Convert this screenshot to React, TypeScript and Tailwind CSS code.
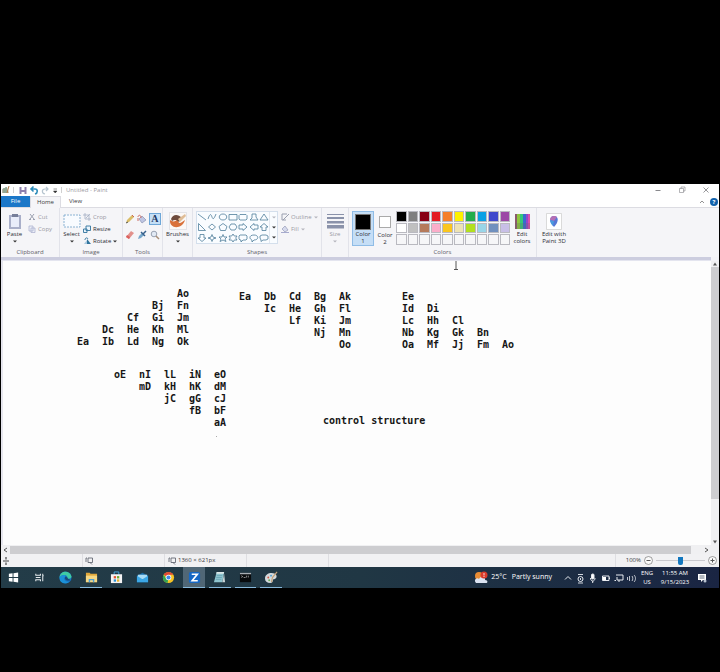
import React from "react";

const stroke = { fill: "none", stroke: "#4f7d9a", strokeWidth: 0.8 } as const;

const shapes: string[] = [
  "M1 1L9 7",
  "M1 6C3 0 4 1 5 4S7 6 9 1",
  "M5 1C10 1 10 7 5 7S0 1 5 1Z",
  "M1 1.5H9V7H1Z",
  "M2 1.5H8L9 2.5V6L8 7H2L1 6V2.5Z",
  "M1 7L3 5V1H7V4L9 7Z",
  "M5 1L9 7H1Z",
  "M1.5 0.5V7.5H8.5Z",
  "M5 1L8.5 4L5 7L1.5 4Z",
  "M5 0.5L9 3.5L7.5 7.5H2.5L1 3.5Z",
  "M3 1H7L9 4L7 7H3L1 4Z",
  "M1 2H5V0.5L9 4L5 7.5V6H1Z",
  "M9 2H5V0.5L1 4L5 7.5V6H9Z",
  "M3 7.5V4H1L5 0.5L9 4H7V7.5Z",
  "M3 0.5V4H1L5 7.5L9 4H7V0.5Z",
  "M5 0.5L6 3L9 4L6 5L5 7.5L4 5L1 4L4 3Z",
  "M5 0.5L6 3H9L7 5L8 7.5L5 6L2 7.5L3 5L1 3H4Z",
  "M5 0L6.3 2H9L7.7 4L9 6H6.3L5 8L3.7 6H1L2.3 4L1 2H3.7Z",
  "M2 1H8L9 2V5L8 6H5L3 8V6H2L1 5V2Z",
  "M5 1C10 1 10 6 5 6L3 8V6C0 5 0 1 5 1Z",
  "M3 1H7L9 2V5L7 6H4L2 7.5V6L1 4V2Z",
];

const swatches: string[] = [
  "bg-black", "bg-[#7f7f7f]", "bg-[#880015]", "bg-[#e31c24]", "bg-[#f57f2a]", "bg-[#fdf100]", "bg-[#22ad4c]", "bg-[#0aa0e4]", "bg-[#3f48cc]", "bg-[#9c48a6]",
  "bg-white", "bg-[#c0c0c0]", "bg-[#b57a5b]", "bg-[#fbadc9]", "bg-[#fac61e]", "bg-[#ede3b4]", "bg-[#b2e01f]", "bg-[#99d5e8]", "bg-[#7090be]", "bg-[#c8bfe7]",
  "bg-[#f6f6f8]", "bg-[#f6f6f8]", "bg-[#f6f6f8]", "bg-[#f6f6f8]", "bg-[#f6f6f8]", "bg-[#f6f6f8]", "bg-[#f6f6f8]", "bg-[#f6f6f8]", "bg-[#f6f6f8]", "bg-[#f6f6f8]",
];

function Group({ label, className, children }: { label?: string; className: string; children: React.ReactNode }) {
  return (
    <section className={`flex h-full shrink-0 flex-col border-r border-[#e2e3ea] ${className}`}>
      <div className="flex h-[39px] pt-[3px]">{children}</div>
      <div className="text-center text-[6px] leading-[10px] text-[#606068]">{label}</div>
    </section>
  );
}

function Caret({ dim = false }: { dim?: boolean }) {
  return (
    <svg viewBox="0 0 4 3" className={`h-[3px] w-[4px] shrink-0 ${dim ? "text-[#b5b5bd]" : "text-[#333]"}`}>
      <path d="M0 0.5H4L2 2.5Z" fill="currentColor" />
    </svg>
  );
}

function SmallButton({ icon, text, dim, caret }: { icon: React.ReactNode; text: string; dim?: boolean; caret?: boolean }) {
  return (
    <button className={`flex h-[12px] items-center gap-[2px] whitespace-nowrap text-[6px] ${dim ? "text-[#9a9aa4]" : "text-[#2c2c34]"}`}>
      <svg viewBox="0 0 8 8" className="size-[8px]">{icon}</svg>
      {text}
      {caret && <Caret dim={dim} />}
    </button>
  );
}

function BigButton({ icon, text, dim, caret, className = "" }: { icon: React.ReactNode; text: React.ReactNode; dim?: boolean; caret?: boolean; className?: string }) {
  return (
    <button className={`flex h-[35px] flex-col items-center text-center text-[6px] leading-[7px] ${dim ? "text-[#9a9aa4]" : "text-[#2c2c34]"} ${className}`}>
      <span className="flex h-[20px] items-center">{icon}</span>
      <span>{text}</span>
      {caret && <span className="flex h-[5px] items-end"><Caret dim={dim} /></span>}
    </button>
  );
}

function TitleBar() {
  return (
    <header className="flex h-[12px] items-center bg-white pl-[1px] text-[6px] text-[#9a9a9f]">
      <svg viewBox="0 0 60 10" className="h-[10px] w-[60px]">
        <path d="M0 4L5 2L7 8H0Z" fill="#b8b5a6" />
        <path d="M2 3V8M4 2V8" stroke="#6d9a84" />
        <path d="M7 1L5 8" stroke="#b17a45" />
        <path d="M11.500 2V8" stroke="#bbb" strokeWidth=".7" />
        <path d="M17.500 2H24.500V9H17.500Z" fill="#8f80ad" />
        <path d="M19.500 2H22.500V5H19.500ZM19.500 7H22.500V9H19.500Z" fill="#fff" />
        <path d="M29 4H33C36 4 36 8 33 9M31.500 1.500L29 4L31.500 6.500" fill="none" stroke="#2d8cba" strokeWidth="1.600" />
        <path d="M46 4H43C39.500 4 39.500 8 43 9M44 2L46 4L44 6" fill="none" stroke="#b5c4cf" strokeWidth="1.200" />
        <path d="M51.500 4H55M51.500 6H55L53.200 8Z" fill="#333" stroke="#333" strokeWidth=".5" />
        <path d="M59.500 2V8" stroke="#bbb" strokeWidth=".7" />
      </svg>
      <h1 className="pl-[4px]">Untitled - Paint</h1>
      <div className="ml-auto flex gap-[16px] pr-[9px] text-[#6b6b70]">
        <button aria-label="Minimize"><svg viewBox="0 0 8 8" className="size-[8px]"><path d="M1.500 4.500H6.500" stroke="currentColor" strokeWidth=".8" /></svg></button>
        <button aria-label="Restore"><svg viewBox="0 0 8 8" className="size-[8px]"><path d="M1.500 2.500H5.500V6.500H1.500ZM3 2.500V1H7V5H5.500" fill="none" stroke="currentColor" strokeWidth=".5" /></svg></button>
        <button aria-label="Close"><svg viewBox="0 0 8 8" className="size-[8px]"><path d="M1.500 1.500L6.500 6.500M6.500 1.500L1.500 6.500" stroke="currentColor" strokeWidth=".7" /></svg></button>
      </div>
    </header>
  );
}

function TabRow() {
  return (
    <nav className="flex h-[12px] items-stretch border-b border-[#dcdce2] bg-white text-[6px] text-[#3a3a40]">
      <button className="w-[29px] bg-[#1b77c8] text-white">File</button>
      <button className="-mb-px w-[31px] border-x border-t border-[#dcdce2] bg-[#f5f5f8]">Home</button>
      <button className="w-[29px]">View</button>
      <div className="ml-auto flex items-center gap-[5px] pr-[1px]">
        <button aria-label="Collapse ribbon"><svg viewBox="0 0 6 6" className="size-[6px]"><path d="M1 4L3 2L5 4" fill="none" stroke="#777" strokeWidth=".8" /></svg></button>
        <button aria-label="Help" className="flex size-[8px] items-center justify-center rounded-full bg-[#1262ac] text-[6px] leading-[8px] font-bold text-white">?</button>
      </div>
    </nav>
  );
}

function Ribbon() {
  return (
    <div className="flex h-[49px] overflow-hidden bg-[#f5f5f8]">
      <Group label="Clipboard" className="w-[59px]">
        <BigButton className="w-[27px]" caret text="Paste" icon={
          <svg viewBox="0 0 14 17" className="h-[17px] w-[14px]"><path d="M1 2H13V16H1Z" fill="#a9afc9" /><path d="M3 4H11V14H3Z" fill="#e9edfa" /><path d="M4 1H10V4H4Z" fill="#777f99" /></svg>} />
        <div className="flex flex-col">
          <SmallButton dim text="Cut" icon={<path d="M2 1L6 6M6 1L2 6M1 6.500H3M5 6.500H7" fill="none" stroke="#9ba0b0" />} />
          <SmallButton dim text="Copy" icon={<path d="M1 1H5V6H1ZM3 3H7V7.500H3Z" fill="#eceef8" stroke="#a7accb" strokeWidth=".7" />} />
        </div>
      </Group>
      <Group label="Image" className="w-[63px]">
        <BigButton className="w-[23px]" caret text="Select" icon={
          <svg viewBox="0 0 18 14" className="h-[14px] w-[18px]"><path d="M1 1H17V13H1Z" fill="#f8fbff" stroke="#6fa1c8" strokeDasharray="2 1" strokeWidth=".8" /></svg>} />
        <div className="flex flex-col">
          <SmallButton dim text="Crop" icon={<path d="M2 0V6H8M0 2H6V8M3 5L7 1" fill="none" stroke="#9ba6bd" strokeWidth=".7" />} />
          <SmallButton text="Resize" icon={<path d="M3 1H7.500V5.500H3ZM0.500 4H4V7.500H0.500Z" fill="#e8f3fc" stroke="#31749d" strokeWidth=".9" />} />
          <SmallButton text="Rotate" caret icon={<><path d="M1 7L4 3V7Z" fill="#a9c8df" /><path d="M4 7V2L8 7Z" fill="#31749d" /><path d="M2 3C2 1 4 0 5 2" fill="none" stroke="#31749d" /></>} />
        </div>
      </Group>
      <Group label="Tools" className="w-[40px]">
        <div className="grid h-[32px] w-full grid-cols-3 grid-rows-2 place-items-center px-px">
          <button aria-label="Pencil"><svg viewBox="0 0 10 10" className="size-[10px]"><path d="M1 9L2 6L7 1L9 3L4 8Z" fill="#dabd68" /><path d="M7 1L9 3" stroke="#c65" /><path d="M1 9L3 8" stroke="#555" /></svg></button>
          <button aria-label="Fill"><svg viewBox="0 0 10 10" className="size-[10px]"><path d="M2 5L5 2L9 6L5 9Z" fill="#bfc6e3" stroke="#7c86a7" strokeWidth=".6" /><path d="M1 3C1 1 4 0 4 4M1 4V7" fill="none" stroke="#cd6c64" /></svg></button>
          <button aria-label="Text" className="flex size-[12px] items-center justify-center border border-[#6ea7d8] bg-[#c5dff6] font-['Liberation_Serif',serif] text-[10px] leading-[10px] font-bold text-[#1f3a66]">A</button>
          <button aria-label="Eraser"><svg viewBox="0 0 10 10" className="size-[10px]"><path d="M1 7L6 1L9 3L4 9Z" fill="#e2918c" /><path d="M1 7L4 9L5 7L2 5Z" fill="#dc5f5d" /></svg></button>
          <button aria-label="Color picker"><svg viewBox="0 0 10 10" className="size-[10px]"><path d="M1 9L2 6L5 3L7 5L4 8Z" fill="#77a8cc" /><path d="M4 2L8 6M6 4L9 1" stroke="#36618c" strokeWidth="1.500" /></svg></button>
          <button aria-label="Magnifier"><svg viewBox="0 0 10 10" className="size-[10px]"><circle cx="4" cy="4" r="2.800" fill="#e2eaf5" stroke="#98a2b2" /><path d="M6 6L9 9" stroke="#a98f78" strokeWidth="1.500" /></svg></button>
        </div>
      </Group>
      <Group className="w-[30px]">
        <BigButton className="w-full" caret text="Brushes" icon={
          <svg viewBox="0 0 18 18" className="size-[18px]"><path d="M.5.5H17.500V17.500H.5Z" fill="#fbf8f6" stroke="#d5d5dc" strokeWidth=".6" /><path d="M1 8C0 17 13 18 16 8C12 11 9 13 9 7C6 10 4 10 1 8Z" fill="#d9713a" /><path d="M2 7C4 2 9 2 13 6L10 10C7 7 5 8 3 9Z" fill="#6f4b3c" /><path d="M9 7L16 2L17 4L11 10Z" fill="#e0bd96" /></svg>} />
      </Group>
      <Group label="Shapes" className="w-[129px]">
        <div className="ml-[3px] flex h-[33px] w-[82px] border border-[#d4dfec] bg-[#f9fcff]">
          <div className="grid flex-1 grid-cols-7 place-items-center">
            {shapes.map((d, i) => (
              <button key={i} aria-label={`Shape ${i + 1}`} className="flex">
                <svg viewBox="0 0 10 8" className="h-[8px] w-[10px]"><path d={d} {...stroke} /></svg>
              </button>
            ))}
          </div>
          <div className="flex w-[8px] flex-col items-center justify-around border-l border-[#e2e8f0]"><Caret dim /><Caret /><Caret /></div>
        </div>
        <div className="ml-[3px] flex flex-col">
          <SmallButton dim caret text="Outline" icon={<path d="M1 1H6M1 1V7H5M2 7L8 1" fill="none" stroke="#9a9faf" />} />
          <SmallButton dim caret text="Fill" icon={<><path d="M1 4L4 1L7 5L4 7Z" fill="#d6daed" stroke="#969bb7" strokeWidth=".7" /><path d="M0 7.500H8" stroke="#a7abce" /></>} />
        </div>
      </Group>
      <Group className="w-[27px]">
        <BigButton dim caret className="w-full" text="Size" icon={
          <svg viewBox="0 0 17 16" className="h-[16px] w-[17px]" fill="#8a92aa"><path d="M0 1H17V2H0ZM0 4H17V6H0ZM0 8H17V10.500H0ZM0 12H17V15.500H0Z" /></svg>} />
      </Group>
      <Group label="Colors" className="w-[188px]">
        <BigButton className="ml-[3px] w-[22px] border border-[#8fbce6] bg-[#c5def6]" text={<>Color<br />1</>} icon={<span className="size-[16px] border border-[#777] bg-black" />} />
        <BigButton className="w-[22px] pt-px" text={<>Color<br />2</>} icon={<span className="size-[12px] border border-[#aaa] bg-white" />} />
        <div className="grid h-[34px] w-[114px] grid-cols-10 gap-x-px gap-y-px">
          {swatches.map((c, i) => <button key={i} aria-label={`Palette color ${i + 1}`} className={`border border-[#b9b9c0] ${c}`} />)}
        </div>
        <BigButton className="w-[24px]" text={<>Edit<br />colors</>} icon={
          <svg viewBox="0 0 15 15" className="size-[15px]"><path d="M0 0H3V15H0Z" fill="#8b5a6c" /><path d="M2 0H5V15H2Z" fill="#8ec63f" /><path d="M5 0H8V15H5Z" fill="#35c77b" /><path d="M8 0H11V15H8Z" fill="#376bd0" /><path d="M11 0H13V15H11Z" fill="#9247cb" /><path d="M13 0H15V15H13Z" fill="#d94eaa" /><path d="M0 9H15V15H0Z" fill="#666" opacity=".25" /></svg>} />
      </Group>
      <Group className="w-[34px] border-r-0">
        <BigButton className="w-full whitespace-nowrap" text={<>Edit with<br />Paint 3D</>} icon={
          <svg viewBox="0 0 16 17" className="h-[17px] w-[16px]"><path d="M.5.5H15.500V16.500H.5Z" fill="#fff" stroke="#ccc" strokeWidth=".7" /><path d="M8 3C13 3 13 9 8 14C3 9 3 3 8 3Z" fill="#5677d5" /><path d="M8 3C5 3 4 5 4 7L8 8L11 4C10 3 9 3 8 3Z" fill="#b56fb5" /><path d="M4 7L8 8L7 13C5 11 4 9 4 7Z" fill="#4a9be0" /></svg>} />
      </Group>
    </div>
  );
}

const blocks: { place: string; rows: string[][] }[] = [
  { place: "left-[74px] top-[27px]", rows: [["", "", "", "", "Ao"], ["", "", "", "Bj", "Fn"], ["", "", "Cf", "Gi", "Jm"], ["", "Dc", "He", "Kh", "Ml"], ["Ea", "Ib", "Ld", "Ng", "Ok"]] },
  { place: "left-[236px] top-[30px]", rows: [["Ea", "Db", "Cd", "Bg", "Ak"], ["", "Ic", "He", "Gh", "Fl"], ["", "", "Lf", "Ki", "Jm"], ["", "", "", "Nj", "Mn"], ["", "", "", "", "Oo"]] },
  { place: "left-[399px] top-[30px]", rows: [["Ee"], ["Id", "Di"], ["Lc", "Hh", "Cl"], ["Nb", "Kg", "Gk", "Bn"], ["Oa", "Mf", "Jj", "Fm", "Ao"]] },
  { place: "left-[111px] top-[108px]", rows: [["oE", "nI", "lL", "iN", "eO"], ["", "mD", "kH", "hK", "dM"], ["", "", "jC", "gG", "cJ"], ["", "", "", "fB", "bF"], ["", "", "", "", "aA"]] },
];

function Canvas() {
  return (
    <main className="flex h-[284px] bg-[#e6e6ee]">
      <div className="relative ml-[2px] flex-1 overflow-hidden bg-[#fdfdfd] font-['DejaVu_Sans_Mono',monospace] text-[10px] leading-[12px] font-bold text-[#161616]">
        {blocks.map((b, i) => (
          <div key={i} className={`absolute ${b.place}`}>
            {b.rows.map((r, j) => (
              <div key={j} className="flex">{r.map((t, k) => <span key={k} className="h-[12px] w-[25px]">{t}</span>)}</div>
            ))}
          </div>
        ))}
        <p className="absolute top-[154px] left-[320px]">control structure</p>
        <span className="absolute top-[175px] left-[213px] size-px bg-[#aaa]" />
        <svg viewBox="0 0 6 10" className="absolute top-[-1px] left-[450px] h-[10px] w-[6px]"><path d="M1 .5H5M3 .5V9.500M1 9.500H5" fill="none" stroke="#555" /></svg>
      </div>
      <div className="flex w-[8px] flex-col items-center bg-[#f0f0f2]">
        <svg viewBox="0 0 6 5" className="h-[6px] w-[6px] shrink-0"><path d="M1 4L3 1L5 4Z" fill="#555" /></svg>
        <div className="h-[232px] w-full bg-[#cdcdd0]" />
        <svg viewBox="0 0 6 5" className="mt-auto h-[6px] w-[6px] shrink-0"><path d="M1 1L3 4L5 1Z" fill="#555" /></svg>
      </div>
    </main>
  );
}

function StatusIcon() {
  return <svg viewBox="0 0 8 8" className="size-[8px]"><path d="M1 1V5M3 1H7.500V5.500H3ZM5 5.500L7 7.500M1 1H2" fill="none" stroke="#555b66" strokeWidth=".8" /></svg>;
}

function Status() {
  return (
    <>
      <div className="flex h-[9px] items-center bg-[#f0f0f2] pr-[10px] pl-[2px]">
        <svg viewBox="0 0 5 6" className="h-[6px] w-[5px]"><path d="M4 1L1 3L4 5" fill="none" stroke="#555" /></svg>
        <div className="ml-[2px] h-[8px] flex-1 bg-[#cdcdd0]" />
        <svg viewBox="0 0 5 6" className="ml-[13px] h-[6px] w-[5px]"><path d="M1 1L4 3L1 5" fill="none" stroke="#555" /></svg>
      </div>
      <footer className="flex h-[13px] items-stretch bg-[#f1f1f3] text-[6px] text-[#3a3a40]">
        <div className="flex w-[82px] items-center border-r border-[#dedee2] pl-px"><svg viewBox="0 0 8 8" className="size-[8px]"><path d="M1 4H7M4 0V2.500M4 5.500V8" stroke="#444" strokeWidth="1.200" /></svg></div>
        <div className="flex w-[82px] items-center border-r border-[#dedee2] pl-[2px]"><StatusIcon /></div>
        <div className="flex w-[82px] items-center gap-[2px] border-r border-[#dedee2] pl-[3px] whitespace-nowrap"><StatusIcon />1360 × 621px</div>
        <div className="w-[82px] border-r border-[#dedee2]" />
        <div className="ml-auto flex items-center gap-[3px] border-l border-[#dedee2] pr-[2px] pl-[10px]">
          <label htmlFor="zoom">100%</label>
          <button aria-label="Zoom out"><svg viewBox="0 0 9 9" className="size-[9px]"><circle cx="4.500" cy="4.500" r="4" fill="#fafafa" stroke="#777" strokeWidth=".7" /><path d="M2.500 4.500H6.500" stroke="#555" /></svg></button>
          <input id="zoom" type="range" defaultValue={50} className="h-[9px] w-[49px] appearance-none bg-[linear-gradient(#c9c9ce,#c9c9ce)] bg-[length:100%_1px] bg-center bg-no-repeat [&::-webkit-slider-thumb]:h-[8px] [&::-webkit-slider-thumb]:w-[5px] [&::-webkit-slider-thumb]:appearance-none [&::-webkit-slider-thumb]:rounded-b-[2px] [&::-webkit-slider-thumb]:bg-[#1277bf]" />
          <button aria-label="Zoom in"><svg viewBox="0 0 9 9" className="size-[9px]"><circle cx="4.500" cy="4.500" r="4" fill="#fafafa" stroke="#777" strokeWidth=".7" /><path d="M2.500 4.500H6.500M4.500 2.500V6.500" stroke="#555" /></svg></button>
        </div>
      </footer>
    </>
  );
}

const apps: { name: string; state?: string; icon: React.ReactNode }[] = [
  { name: "Start", icon: <path d="M2 3L6 2.500V6.500H2ZM7 2.300L12 1.700V6.500H7ZM2 7.500H6V11.500L2 11ZM7 7.500H12V12.300L7 11.700Z" fill="#fff" /> },
  { name: "Task view", icon: <path d="M3 3V4.500H8V3M3 11V9.500H8V11M3 7H8M10.500 3V11M10 5H11.500" fill="none" stroke="#e6ebee" strokeWidth="1.100" /> },
  { name: "Edge", icon: <><circle cx="7" cy="7" r="6.500" fill="#1673c4" /><path d="M.6 7C1-1 12-1 13.500 6C13 9 9 9 9 7C9 4 4 3 .6 7Z" fill="#3fcba3" /><path d="M.6 7C3 3 8 4 7 6C4 8 6 12 11 11.500C7 15 .5 13 .6 7Z" fill="#1b91d8" /><path d="M7 6C5 9 8 11 12 10C13 9 9 9 9 7Z" fill="#1a4b79" /></> },
  { name: "Explorer", state: "border-[#86b9dc]", icon: <><path d="M1 2H5L6 3H13V12H1Z" fill="#e0a83c" /><path d="M1 5H13V12H1Z" fill="#f5d885" /><path d="M4 12V8.500H10V12H8.500V10H5.500V12Z" fill="#4f9fd3" /></> },
  { name: "Store", icon: <><path d="M4.500 4V1H9.500V4" fill="none" stroke="#4aa8de" /><path d="M1 3.500H13V13H1Z" fill="#f4f4f4" /><path d="M4 5.500H6.500V8H4Z" fill="#e55132" /><path d="M7.500 5.500H10V8H7.500Z" fill="#6ca932" /><path d="M4 9H6.500V11.500H4Z" fill="#2790d4" /><path d="M7.500 9H10V11.500H7.500Z" fill="#eab22d" /></> },
  { name: "Mail", icon: <><path d="M1 5L7 2L13 5V12H1Z" fill="#176ca8" /><path d="M2 4H12V9H2Z" fill="#a9dcf5" /><path d="M1 5L7 9L13 5V12H1Z" fill="#3ba7e6" /></> },
  { name: "Chrome", icon: <><circle cx="7" cy="7" r="6" fill="#f5c324" /><path d="M7 7L1.800 4C4 0 10 0 12.200 4H7Z" fill="#df4837" /><path d="M7 7L6 13C1 12 0 7 1.800 4L5 9Z" fill="#35a453" /><circle cx="7" cy="7" r="3" fill="#fff" /><circle cx="7" cy="7" r="2.200" fill="#4387e5" /></> },
  { name: "Zoom", state: "border-[#86b9dc] bg-[#506776]", icon: <><rect x="1" y="1" width="12" height="12" rx="2" fill="#1768c4" /><path d="M4 3.500H10L4.500 10.500H10.500" fill="none" stroke="#fff" strokeWidth="1.800" /></> },
  { name: "Notepad", state: "border-[#86b9dc]", icon: <><path d="M4 1H12L10 12H1Z" fill="#8fc5cf" /><path d="M4 1H12L11.600 3H3.500Z" fill="#dce8e8" /><path d="M10 12L12 3L13 12Z" fill="#c9d4d7" /><path d="M4 5H10M3.500 7H9.500M3 9H9" stroke="#5b98aa" strokeWidth=".7" /></> },
  { name: "Command prompt", state: "border-[#86b9dc]", icon: <><path d="M1 2H13V12H1Z" fill="#080b0d" /><path d="M1 2H13V3.500H1Z" fill="#a8afb5" /><path d="M2.500 5L4 6L2.500 7M5 7H7M8 5V7M10 5V7" fill="none" stroke="#ccc" strokeWidth=".7" /></> },
  { name: "Paint", state: "border-[#86b9dc]", icon: <><path d="M0 8C0 3 6 1 11 3C14 6 12 9 9 9C8 10 9 13 6 13C2 13 0 11 0 8Z" fill="#d3d9dc" /><circle cx="3.500" cy="7" r="1" fill="#d15a45" /><circle cx="6.500" cy="5" r="1" fill="#4a9bcf" /><circle cx="4.500" cy="10" r="1" fill="#67a956" /><path d="M13 1L8 7L7 12" fill="none" stroke="#c3a077" strokeWidth="1.300" /></> },
];

function Taskbar() {
  return (
    <nav className="flex h-[21px] items-stretch bg-linear-to-r from-[#233c48] via-[#203744] to-[#1a2543] text-[7px] text-white">
      <div className="flex w-[283px]">
        {apps.map((a) => (
          <button key={a.name} aria-label={a.name} className={`mx-[2px] flex flex-1 items-center justify-center border-b ${a.state ?? "border-transparent"}`}>
            <svg viewBox="0 0 14 14" className="size-[13px] shrink-0">{a.icon}</svg>
          </button>
        ))}
      </div>
      <div className="ml-auto flex items-center pr-[12px] whitespace-nowrap">
        <button className="flex items-center gap-[3px]">
          <svg viewBox="0 0 14 14" className="size-[14px]"><circle cx="5" cy="5" r="4" fill="#e98c34" /><path d="M2 12C-1 9 3 6 5 8C7 4 12 6 11 9C14 9 14 12 12 12Z" fill="#dce4f2" /><circle cx="10" cy="4" r="3.500" fill="#d93a2b" /><path d="M10 2V4.500M10 5V6" stroke="#fff" strokeWidth=".8" /></svg>
          <span>25°C</span><span className="pl-[2px]">Partly sunny</span>
        </button>
        <svg viewBox="0 0 74 12" className="ml-[11px] h-[12px] w-[74px]" fill="none" stroke="#e8ebf0">
          <path d="M2 7.500L5 4.500L8 7.500" />
          <circle cx="17.500" cy="7" r="2.500" /><path d="M15 2.500H20M17.500 6V8M15 11H20" strokeWidth=".9" />
          <rect x="28.500" y="2" width="2.500" height="5" rx="1" fill="#fff" /><path d="M27.500 6C27.500 10 32 10 32 6M29.700 9V11" />
          <path d="M39.500 4H46V8.500H39.500ZM46.500 5.500V7" /><path d="M40 5H43V8H40Z" fill="#fff" stroke="none" />
          <path d="M53 3H60V8H54V5M51.500 8.500H53M56 8V10" />
          <path d="M64.500 5V8M66.500 4V9M69 4C70 5 70 8 69 9M71 3C73 5 73 8 71 10" strokeWidth=".8" />
        </svg>
        <div className="ml-[2px] w-[16px] text-center text-[6px] leading-[9px]">ENG<br />US</div>
        <time className="ml-[4px] w-[32px] text-center text-[6px] leading-[9px]">11:55 AM<br />9/15/2023</time>
        <svg viewBox="0 0 10 10" className="ml-[6px] size-[10px]"><path d="M1 1H9V7H6L4 9V7H1Z" fill="#fff" /><path d="M2.500 3H7.500M2.500 5H7.500" stroke="#26334c" strokeWidth=".7" /><circle cx="8" cy="8" r="1.500" fill="#b8c2d0" /></svg>
      </div>
    </nav>
  );
}

export default function App() {
  return (
    <div className="min-h-screen bg-black px-px pt-[184px] pb-[84px] font-['Open_Sans','Noto_Sans',sans-serif]">
      <TitleBar />
      <TabRow />
      <Ribbon />
      <div className="flex h-[4px] bg-[#f3f3f7]"><div className="mr-[8px] flex-1 border-b border-[#e4e5ef] bg-[#cccddf]" /></div>
      <Canvas />
      <Status />
      <Taskbar />
    </div>
  );
}
